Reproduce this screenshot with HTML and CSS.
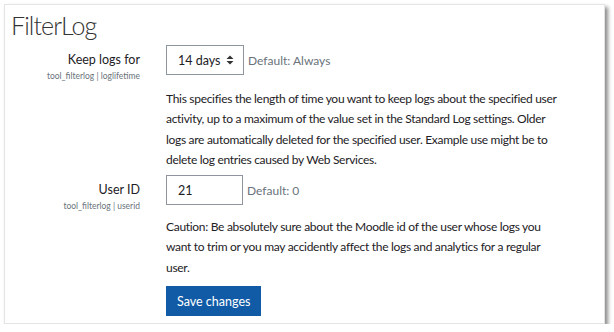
FILE: index.html
```html
<!DOCTYPE html>
<html lang="en">
  <head>
    <meta charset="UTF-8" />
    <title>FilterLog</title>
    <link rel="stylesheet" href="styles.css">
  </head>
  <body>
    <div class="card">
      <h2>FilterLog</h2>

      <div class="setting">
        <div class="setting-label">
          <label for="loglifetime">Keep logs for</label>
          <span class="setting-name">tool_filterlog | loglifetime</span>
        </div>
        <div class="setting-body">
          <div class="control-line">
            <div class="select-box" id="loglifetime">
              <span>14 days</span>
              <svg class="updown" width="8" height="10" viewBox="0 0 8 10">
                <path d="M4 0.5 L7.5 4 H0.5 Z M4 9.5 L7.5 6 H0.5 Z" fill="#333" />
              </svg>
            </div>
            <span class="default">Default: Always</span>
          </div>
          <p class="desc">
            This specifies the length of time you want to keep logs about the specified user<br>
            activity, up to a maximum of the value set in the Standard Log settings. Older<br>
            logs are automatically deleted for the specified user. Example use might be to<br>
            delete log entries caused by Web Services.
          </p>
        </div>
      </div>

      <div class="setting">
        <div class="setting-label">
          <label for="userid">User ID</label>
          <span class="setting-name">tool_filterlog | userid</span>
        </div>
        <div class="setting-body">
          <div class="control-line">
            <div class="text-box" id="userid">21</div>
            <span class="default">Default: 0</span>
          </div>
          <p class="desc caution">
            Caution: Be absolutely sure about the Moodle id of the user whose logs you<br>
            want to trim or you may accidently affect the logs and analytics for a regular<br>
            user.
          </p>
        </div>
      </div>

      <div class="setting">
        <div class="setting-label"></div>
        <div class="setting-body">
          <button type="submit">Save changes</button>
        </div>
      </div>
    </div>
  </body>
</html>
```

FILE: styles.css
```css
* {
  margin: 0;
  padding: 0;
  box-sizing: border-box;
}
body {
  font-family: Lato, "Open Sans", sans-serif;
  font-size: 13px;
  color: #1d2125;
  background: #fff;
}
.card {
  margin: 4px 0 0 4px;
  width: 601px;
  height: 320px;
  background: #fff;
  border: 1px solid #e4e4e4;
  box-shadow: 3px 3px 4px rgba(0, 0, 0, 0.45);
  padding: 3px 0 0 0;
}
h2 {
  font-size: 25px;
  font-weight: 300;
  letter-spacing: -0.9px;
  color: #333;
  margin-left: 6px;
  line-height: 34px;
  margin-bottom: 3px;
}
.setting {
  display: grid;
  grid-template-columns: 135px 1fr;
  column-gap: 26px;
}
.setting-label {
  display: flex;
  flex-direction: column;
  align-items: flex-end;
  text-align: right;
  padding-top: 5px;
}
.setting-label label {
  font-size: 12.5px;
  line-height: 20px;
}
.setting-name {
  font-size: 8.5px;
  color: #6a737b;
  line-height: 12px;
}
.control-line {
  display: flex;
  align-items: center;
  gap: 4px;
}
.select-box,
.text-box {
  height: 30px;
  border: 1px solid #8f959e;
  display: flex;
  align-items: center;
  padding-left: 11px;
  font-size: 12.5px;
}
.select-box {
  width: 78px;
  justify-content: space-between;
  padding-right: 9px;
}
.text-box {
  width: 77px;
}
.default {
  color: #6a737b;
  font-size: 12px;
}
.desc {
  margin-top: 14px;
  margin-bottom: 5px;
  line-height: 20.3px;
  font-size: 12px;
  letter-spacing: -0.3px;
  white-space: nowrap;
}
.caution {
  margin-top: 12px;
  margin-bottom: 6px;
}
button {
  margin-top: 2px;
  height: 30px;
  padding: 0 11px;
  border: none;
  background-color: #115ba6;
  color: #fff;
  font-family: inherit;
  font-size: 12.5px;
}
```
